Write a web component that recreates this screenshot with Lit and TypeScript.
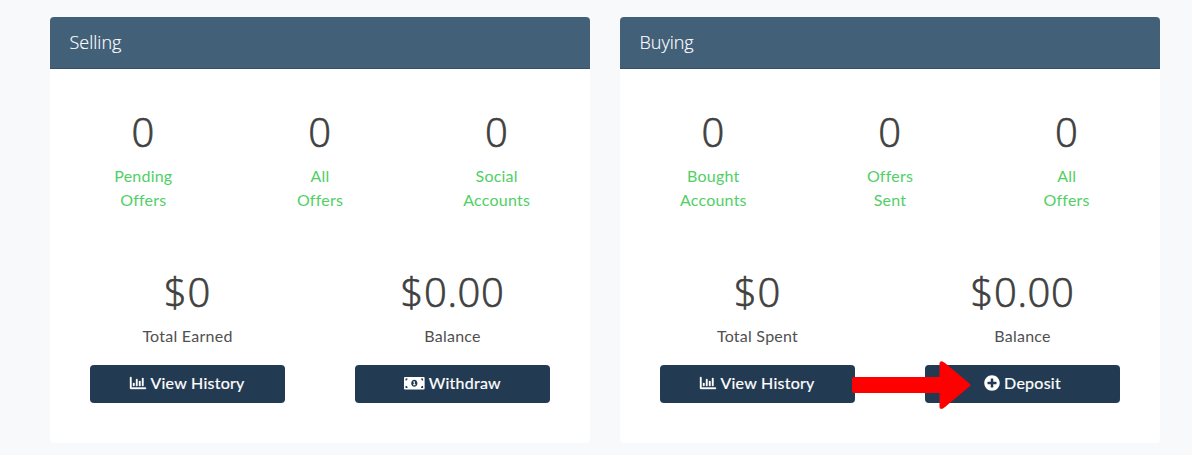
import { LitElement, html, svg, css } from "lit";
import { customElement, property } from "lit/decorators.js";

const icons: Record<string, { w: number; path: string }> = {
  chart: {
    w: 512,
    path: "M396.8 352h22.4c6.4 0 12.8-6.4 12.8-12.8V108.8c0-6.4-6.4-12.8-12.8-12.8h-22.4c-6.4 0-12.8 6.4-12.8 12.8v230.4c0 6.4 6.4 12.8 12.8 12.8zm-192 0h22.4c6.4 0 12.8-6.4 12.8-12.8V140.8c0-6.4-6.4-12.8-12.8-12.8h-22.4c-6.4 0-12.8 6.4-12.8 12.8v198.4c0 6.4 6.4 12.8 12.8 12.8zm96 0h22.4c6.4 0 12.8-6.4 12.8-12.8V204.8c0-6.4-6.4-12.8-12.8-12.8h-22.4c-6.4 0-12.8 6.4-12.8 12.8v134.4c0 6.4 6.4 12.8 12.8 12.8zM496 400H48V80c0-8.84-7.16-16-16-16H16C7.16 64 0 71.16 0 80v336c0 17.67 14.33 32 32 32h464c8.84 0 16-7.16 16-16v-16c0-8.84-7.16-16-16-16zm-387.2-48h22.4c6.4 0 12.8-6.4 12.8-12.8v-70.4c0-6.4-6.4-12.8-12.8-12.8h-22.4c-6.4 0-12.8 6.4-12.8 12.8v70.4c0 6.4 6.4 12.8 12.8 12.8z",
  },
  money: {
    w: 640,
    path: "M352 288h-16v-88c0-4.42-3.58-8-8-8h-13.58c-4.74 0-9.37 1.4-13.31 4.03l-15.33 10.22a7.994 7.994 0 0 0-2.22 11.09l8.88 13.31a7.994 7.994 0 0 0 11.09 2.22l.47-.31V288h-16c-4.42 0-8 3.58-8 8v16c0 4.42 3.58 8 8 8h64c4.42 0 8-3.58 8-8v-16c0-4.42-3.58-8-8-8zM608 64H32C14.33 64 0 78.33 0 96v320c0 17.67 14.33 32 32 32h576c17.67 0 32-14.33 32-32V96c0-17.67-14.33-32-32-32zM48 400v-64c35.35 0 64 28.65 64 64H48zm0-224v-64h64c0 35.35-28.65 64-64 64zm272 192c-53.02 0-96-50.15-96-112 0-61.86 42.98-112 96-112s96 50.14 96 112c0 61.87-43 112-96 112zm272 32h-64c0-35.35 28.65-64 64-64v64zm0-224c-35.35 0-64-28.65-64-64h64v64z",
  },
  plus: {
    w: 512,
    path: "M256 8C119 8 8 119 8 256s111 248 248 248 248-111 248-248S393 8 256 8zm144 276c0 6.6-5.4 12-12 12h-92v92c0 6.6-5.4 12-12 12h-56c-6.6 0-12-5.4-12-12v-92h-92c-6.6 0-12-5.4-12-12v-56c0-6.6 5.4-12 12-12h92v-92c0-6.6 5.4-12 12-12h56c6.6 0 12 5.4 12 12v92h92c6.6 0 12 5.4 12 12v56z",
  },
};

interface Stat { value: string; lines: string[] }
interface Total { value: string; label: string; icon: string; action: string; pointer?: boolean }

@customElement("summary-card")
class SummaryCard extends LitElement {
  @property() heading = "";
  @property({ attribute: false }) stats: Stat[] = [];
  @property({ attribute: false }) totals: Total[] = [];

  static styles = css`
    :host { display: block; width: 540px; height: 426px; background: #fff; border-radius: 4px; }
    .head { box-sizing: border-box; height: 52px; padding: 0 19.5px; color: #fff;
      background: #436079; border-bottom: 1px solid #36506a; border-radius: 4px 4px 0 0;
      font: 300 18px/51px "Open Sans", sans-serif; -webkit-text-stroke: 0.15px #fff; }
    .stats { display: grid; grid-template-columns: repeat(3, 1fr); padding: 39px 5px 0; text-align: center; }
    .totals { display: grid; grid-template-columns: repeat(2, 1fr); padding: 56px 5px 0; text-align: center; }
    .value { height: 48px; line-height: 48px; margin-bottom: 8px; font-size: 40px; font-weight: 300; color: #404040;
      font-family: "Open Sans", sans-serif; letter-spacing: 0.6px; -webkit-text-stroke: 0.7px #404040; }
    .label { line-height: 24px; color: #51cf66; letter-spacing: 0.22px; }
    .total { padding: 0 35px; }
    .caption { line-height: 24px; margin-bottom: 17px; color: #505050; letter-spacing: 0.25px; }
    .btn { position: relative; display: flex; align-items: center; justify-content: center; gap: 4px; box-sizing: border-box;
      width: 195px; height: 38px; padding: 0; border: 0; border-radius: 4px; background: #223a52; color: #fff;
      font: 400 16px/24px "Lato", sans-serif; letter-spacing: 0.26px; }
    .text { -webkit-text-stroke: 0.2px #fff; margin-top: -2px; }
    .icon { height: 16px; flex: none; fill: #fff; overflow: visible; margin-top: -2px; }
    .chart { stroke: #fff; stroke-width: 12; }
    .money { height: 16.5px; margin-top: -1px; }
    .arrow { position: absolute; left: -73px; top: -4px; width: 119px; height: 48px; fill: #f00; }
  `;

  render() {
    return html`
      <div class="head">${this.heading}</div>
      <div class="stats">
        ${this.stats.map((s) => html`<div>
          <div class="value">${s.value}</div>
          ${s.lines.map((l) => html`<div class="label">${l}</div>`)}
        </div>`)}
      </div>
      <div class="totals">
        ${this.totals.map((t) => html`<div class="total">
          <div class="value">${t.value}</div>
          <div class="caption">${t.label}</div>
          <button class="btn">
            <svg class="icon ${t.icon}" viewBox="0 0 ${icons[t.icon].w} 512">${svg`<path d=${icons[t.icon].path}></path>`}</svg>
            <span class="text">${t.action}</span>
            ${t.pointer ? html`<svg class="arrow" viewBox="0 0 119 48"><path d="M2 16H87.5V2Q88 0 90 .2L93 2L118 23Q119 24 118 25L93 46Q91 48 89 48Q87.5 47.5 87.5 46V32H2Q0 32 0 30V18Q0 16 2 16Z"></path></svg>` : ""}
          </button>
        </div>`)}
      </div>`;
  }
}

@customElement("app-root")
class AppRoot extends LitElement {
  static styles = css`
    :host { display: flex; gap: 30px; box-sizing: border-box; width: 1192px; height: 455px; padding: 17px 0 0 50px;
      overflow: hidden; background: #f8f9fb; font: 400 16px/24px "Lato", sans-serif; }
  `;

  render() {
    return html`
      <summary-card heading="Selling"
        .stats=${[
          { value: "0", lines: ["Pending", "Offers"] },
          { value: "0", lines: ["All", "Offers"] },
          { value: "0", lines: ["Social", "Accounts"] },
        ]}
        .totals=${[
          { value: "$0", label: "Total Earned", icon: "chart", action: "View History" },
          { value: "$0.00", label: "Balance", icon: "money", action: "Withdraw" },
        ]}></summary-card>
      <summary-card heading="Buying"
        .stats=${[
          { value: "0", lines: ["Bought", "Accounts"] },
          { value: "0", lines: ["Offers", "Sent"] },
          { value: "0", lines: ["All", "Offers"] },
        ]}
        .totals=${[
          { value: "$0", label: "Total Spent", icon: "chart", action: "View History" },
          { value: "$0.00", label: "Balance", icon: "plus", action: "Deposit", pointer: true },
        ]}></summary-card>`;
  }
}
